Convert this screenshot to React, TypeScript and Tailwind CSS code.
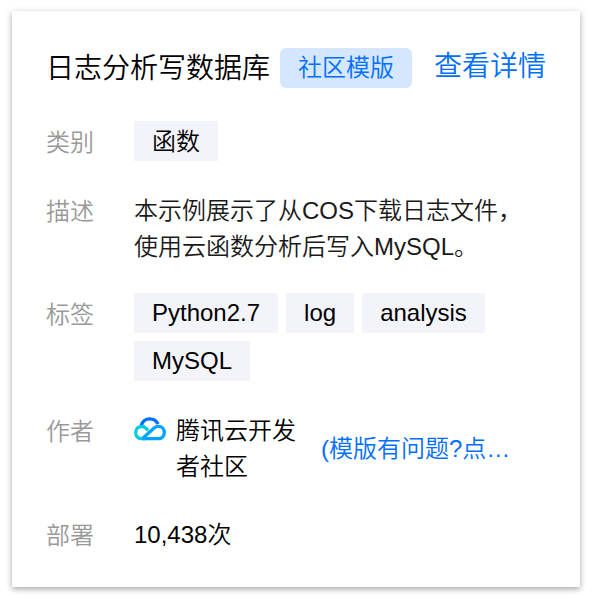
import React from "react";

function Row({ label, className, labelClass, children }: { label: string; className: string; labelClass: string; children: React.ReactNode }) {
  return (
    <div className={`flex items-start ${className}`}>
      <span className={`w-[88px] shrink-0 text-[#999999] ${labelClass}`}>{label}</span>
      {children}
    </div>
  );
}

function Tag({ children, className = "leading-[40px]" }: { children: React.ReactNode; className?: string }) {
  return <span className={`block h-10 bg-[#f3f4f9] px-[18px] ${className}`}>{children}</span>;
}

function CloudLogo() {
  return (
    <svg className="mt-1 h-6 w-8 shrink-0" viewBox="0 0 32 24" fill="none" strokeWidth="3.3">
      <path d="M7.3 8.4C8.5 4.5 11.8 1.9 15.8 1.9C19.4 1.9 22.5 3.9 24 7.1" stroke="#006eff" />
      <path d="M14.2 13.3L11.9 11.3C10.5 10.1 9.3 9.5 7.7 9.5C4.3 9.5 1.7 12.2 1.7 15.6C1.7 19.1 4.3 21.7 7.8 21.7H12" stroke="#00cddb" />
      <path d="M8.3 21.7L19.8 11.3C21.3 9.9 22.7 9.4 24.4 9.4C27.7 9.4 30.3 12.1 30.3 15.6C30.3 19.1 27.7 21.7 24.2 21.7H8.3" stroke="#00a3ff" />
    </svg>
  );
}

export default function App() {
  return (
    <main className="h-[599px] w-[592px] overflow-hidden bg-white px-3 pt-[11px] font-['Liberation_Sans','Noto_Sans_CJK_SC',sans-serif] text-2xl leading-9 font-[350] text-black">
      <section className="h-[576px] w-[568px] bg-white pl-[34px] pt-[37px] shadow-[0_2px_6px_rgba(0,0,0,0.36)]">
        <header className="flex h-10 items-start whitespace-nowrap">
          <h1 className="w-[234px] text-[28px] leading-[42px] font-[350]">日志分析写数据库</h1>
          <span className="h-10 w-[132px] rounded-[6px] bg-[#d5e7ff] text-center leading-[40px] text-[#006eff]">社区模版</span>
          <a className="ml-[22px] text-[28px] leading-[38px] text-[#006eff]">查看详情</a>
        </header>
        <Row label="类别" className="mt-[33px]" labelClass="pt-1"><Tag className="leading-[42px]">函数</Tag></Row>
        <Row label="描述" className="mt-8" labelClass="pt-px">
          <p className="whitespace-nowrap text-[#1a1a1a]">本示例展示了从COS下载日志文件，<br />使用云函数分析后写入MySQL。</p>
        </Row>
        <Row label="标签" className="mt-7" labelClass="pt-1">
          <div className="flex w-[380px] flex-wrap gap-2"><Tag>Python2.7</Tag><Tag>log</Tag><Tag>analysis</Tag><Tag>MySQL</Tag></div>
        </Row>
        <Row label="作者" className="mt-8" labelClass="pt-px">
          <CloudLogo />
          <span className="ml-[10px] w-[145px] whitespace-nowrap">腾讯云开发<br />者社区</span>
          <a className="mt-[18px] whitespace-nowrap text-[#006eff]">(模版有问题?点…</a>
        </Row>
        <Row label="部署" className="mt-8" labelClass="pt-px"><span>10,438次</span></Row>
      </section>
    </main>
  );
}
